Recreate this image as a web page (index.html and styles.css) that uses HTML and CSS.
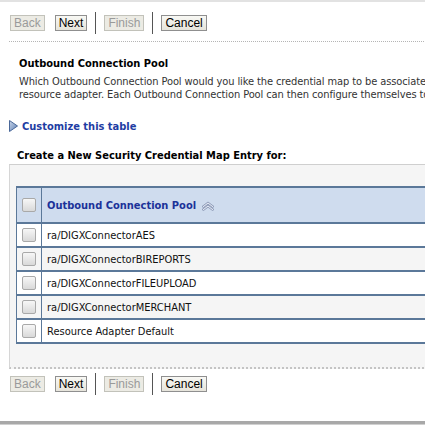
FILE: index.html
```html
<!DOCTYPE html>
<html>
<head>
<meta charset="utf-8">
<link rel="stylesheet" href="styles.css">
</head>
<body>
<div class="page">
  <div class="toolbar">
    <button class="btn disabled">Back</button>
    <button class="btn next">Next</button>
    <span class="sep"></span>
    <button class="btn disabled">Finish</button>
    <span class="sep"></span>
    <button class="btn">Cancel</button>
  </div>
  <div class="content">
    <h2 class="title">Outbound Connection Pool</h2>
    <p class="desc">Which Outbound Connection Pool would you like the credential map to be associated with? Select the outbound connection pool for this<br>resource adapter. Each Outbound Connection Pool can then configure themselves to use the credential mappings.</p>
  </div>
  <div class="customize">
    <svg class="tri" width="9" height="12" viewBox="0 0 9 12">
      <defs>
        <linearGradient id="tg" x1="0" y1="0" x2="1" y2="1">
          <stop offset="0" stop-color="#c9d6ea"/>
          <stop offset="1" stop-color="#5d7fb3"/>
        </linearGradient>
      </defs>
      <polygon points="0.5,0.5 8.5,6 0.5,11.5" fill="url(#tg)" stroke="#4a6899" stroke-width="1"/>
    </svg>
    <span class="link">Customize this table</span>
  </div>
  <div class="subtitle">Create a New Security Credential Map Entry for:</div>
  <div class="panel">
    <table class="grid">
      <thead>
        <tr>
          <th class="cb"><span class="box"></span></th>
          <th class="name">Outbound Connection Pool
            <svg class="sort" width="14" height="10" viewBox="0 0 14 10">
              <path d="M1,5.5 L7,1 L13,5.5 L11.5,6.5 L7,3.2 L2.5,6.5 Z" fill="#dfe6f2" stroke="#7f8cab" stroke-width="0.8" stroke-linejoin="round"/>
              <path d="M1,8.5 L7,4 L13,8.5 L11.5,9.5 L7,6.2 L2.5,9.5 Z" fill="#dfe6f2" stroke="#7f8cab" stroke-width="0.8" stroke-linejoin="round"/>
            </svg>
          </th>
        </tr>
      </thead>
      <tbody>
        <tr><td class="cb"><span class="box"></span></td><td>ra/DIGXConnectorAES</td></tr>
        <tr class="alt"><td class="cb"><span class="box"></span></td><td>ra/DIGXConnectorBIREPORTS</td></tr>
        <tr><td class="cb"><span class="box"></span></td><td>ra/DIGXConnectorFILEUPLOAD</td></tr>
        <tr class="alt"><td class="cb"><span class="box"></span></td><td>ra/DIGXConnectorMERCHANT</td></tr>
        <tr><td class="cb"><span class="box"></span></td><td>Resource Adapter Default</td></tr>
      </tbody>
    </table>
  </div>
  <div class="toolbar bottom">
    <button class="btn disabled">Back</button>
    <button class="btn next">Next</button>
    <span class="sep"></span>
    <button class="btn disabled">Finish</button>
    <span class="sep"></span>
    <button class="btn">Cancel</button>
  </div>
  <div class="footer-line"></div>
</div>
</body>
</html>
```
FILE: styles.css
```css
html, body {
  margin: 0;
  padding: 0;
  background: #fff;
  overflow: hidden;
}
body {
  width: 425px;
  height: 425px;
  border-top: 2px solid #e2e2e2;
  box-sizing: border-box;
  font-family: "DejaVu Sans Condensed", "DejaVu Sans", sans-serif;
  font-size: 11px;
  color: #222;
}
.page {
  width: 520px;
  height: 423px;
  display: flex;
  flex-direction: column;
  position: relative;
}
.toolbar {
  display: flex;
  align-items: center;
  height: 22px;
  margin: 10px 0 0 9px;
  padding-left: 1px;
  padding-bottom: 7px;
  border-bottom: 1px dotted #b5b5b5;
}
.toolbar.bottom {
  border-bottom: none;
  margin-top: 4px;
}
.btn {
  font-family: "Liberation Sans", Arial, sans-serif;
  font-size: 12px;
  height: 16px;
  line-height: 14px;
  padding: 0 3px;
  margin: 0;
  border: 1px solid #8f8f8f;
  background: linear-gradient(#f8f8f4, #e6e4db);
  color: #000;
  border-radius: 0;
}
.btn.disabled {
  color: #9a9a9a;
  border-color: #c2c2ba;
  background: #ecebe4;
}
.btn.next { margin-left: 10px; }
.sep {
  width: 1px;
  height: 22px;
  background: #555;
  margin: 0 8px;
}
.content {
  padding-left: 19px;
}
.title {
  margin: 14px 0 0 0;
  font-size: 11px;
  font-weight: bold;
  color: #000;
  line-height: 15px;
}
.desc {
  margin: 4px 0 0 0;
  white-space: nowrap;
  line-height: 13px;
  color: #333;
  letter-spacing: -0.1px;
}
.customize {
  display: flex;
  align-items: center;
  margin: 18px 0 0 9px;
  height: 14px;
}
.tri { margin-right: 4px; }
.link {
  font-weight: bold;
  color: #1f3da3;
}
.subtitle {
  margin: 16px 0 0 17px;
  font-weight: bold;
  color: #000;
  line-height: 14px;
}
.panel {
  margin: 1px 0 0 9px;
  border-top: 1px solid #cfcfcf;
  border-left: 1px solid #d6d6d6;
  border-bottom: 2px dotted #c4c4c4;
  background: #f5f5f5;
  padding: 21px 0 23px 6px;
}
.grid {
  border-collapse: collapse;
  width: 520px;
  border-left: 1px solid #5b7899;
}
.grid th, .grid td {
  border-top: 2px solid #5b7899;
  padding: 0;
  text-align: left;
  white-space: nowrap;
}
.grid thead th {
  background: #cfdcee;
  height: 34px;
}
.grid tbody td {
  background: #fff;
  height: 22px;
  color: #111;
}
.grid tbody tr.alt td { background: #f5f5f5; }
.grid tbody tr:last-child td { border-bottom: 2px solid #5b7899; }
.grid .cb {
  width: 24px;
  border-right: 1px solid #5b7899;
  text-align: center;
}
.grid td:not(.cb), .grid th.name {
  padding-left: 5px;
}
.grid th.name {
  font-weight: bold;
  color: #1c3299;
}
.sort { vertical-align: middle; margin-left: 1px; }
.box {
  display: inline-block;
  width: 12px;
  height: 12px;
  border: 1px solid #a9a9a9;
  border-radius: 2px;
  background: linear-gradient(#f7f7f7, #d9d9d9);
  vertical-align: middle;
}
.footer-line {
  position: absolute;
  left: 0;
  right: 0;
  top: 419px;
  height: 3px;
  background: #a8a8a8;
  border-bottom: 1px solid #d0d0d0;
}
```
